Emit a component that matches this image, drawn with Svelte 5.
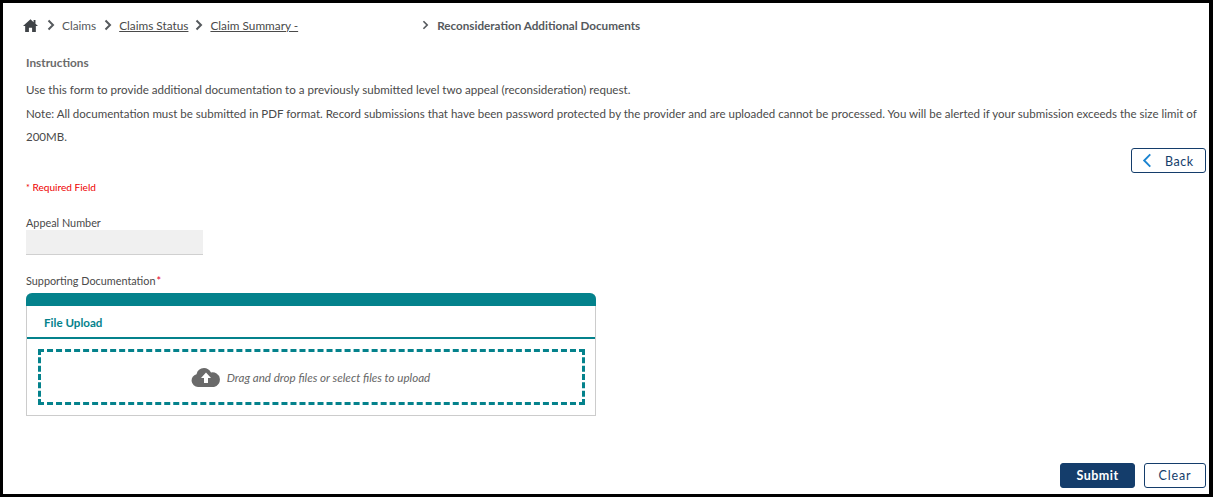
<script lang="ts">
  const crumbs = ['Claims Status', 'Claim Summary -'];
</script>

<div class="page">
  <nav class="crumbs">
    <svg class="home" viewBox="0 0 16 14" width="15" height="13" preserveAspectRatio="none" aria-hidden="true">
      <path d="M8 .2 0 7.600h2.300V14h4v-4.500h3.400V14h4V7.600H16l-2.700-2.400V1.200h-2v2.200z" />
    </svg>
    <svg class="sep" viewBox="0 0 8 12" width="8" height="12" aria-hidden="true"><path d="M1.500 1.500 6 6l-4.500 4.500" /></svg>
    <span class="plain">Claims</span>
    {#each crumbs as c}
      <svg class="sep" viewBox="0 0 8 12" width="8" height="12" aria-hidden="true"><path d="M1.500 1.500 6 6l-4.500 4.500" /></svg>
      <a href="#top" class="link">{c}</a>
    {/each}
    <svg class="sep small" viewBox="0 0 8 12" width="7" height="10" aria-hidden="true"><path d="M1.500 1.500 6 6l-4.500 4.500" /></svg>
    <span class="current">Reconsideration Additional Documents</span>
  </nav>

  <section class="intro">
    <h2>Instructions</h2>
    <p class="first">Use this form to provide additional documentation to a previously submitted level two appeal (reconsideration) request.</p>
    <p class="note">Note: All documentation must be submitted in PDF format. Record submissions that have been password protected by the provider and are uploaded cannot be processed. You will be alerted if your submission exceeds the size limit of 200MB.</p>
  </section>

  <div class="back-row">
    <button class="btn back">
      <svg viewBox="0 0 10 16" width="10" height="15" aria-hidden="true"><path d="M8.500 1.500 2 8l6.500 6.500" /></svg>
      <span>Back</span>
    </button>
  </div>

  <div class="required"><span>*</span> Required Field</div>

  <label class="field-label" for="appeal">Appeal Number</label>
  <input id="appeal" class="readonly" disabled />

  <div class="field-label docs">Supporting Documentation<span class="star">*</span></div>
  <div class="upload">
    <div class="upload-bar"></div>
    <div class="upload-title">File Upload</div>
    <div class="drop-wrap">
      <div class="drop">
        <svg viewBox="0 0 30 20" width="30" height="20" aria-hidden="true">
          <path class="cloud" d="M7 20a6.500 6.500 0 0 1-1.500-12.800A8 8 0 0 1 13 1c3 0 5.500 1.500 7 4.500a6.800 6.800 0 0 1 3 14.500z" />
          <path class="arrow" d="M15 5.500 20 11h-3v5h-4v-5h-3z" />
        </svg>
        <span>Drag and drop files or select files to upload</span>
      </div>
    </div>
  </div>

  <div class="actions">
    <button class="btn submit">Submit</button>
    <button class="btn clear">Clear</button>
  </div>
</div>

<style>
  :global(body) { margin: 0; background: #fff; }
  .page {
    box-sizing: border-box;
    height: 497px;
    border: 3px solid #000;
    border-right-width: 4px;
    padding: 0 3px 6px 23px;
    display: flex;
    flex-direction: column;
    align-items: flex-start;
    font-family: Lato, "Liberation Sans", sans-serif;
    font-size: 11.600px;
    color: #4a4a4a;
  }
  .crumbs { display: flex; align-items: center; height: 16px; margin-top: 14px; font-size: 11.800px; }
  .home { fill: #3f4347; margin-left: -3px; margin-right: 9px; }
  .sep { fill: none; stroke: #55595d; stroke-width: 2; margin-right: 7px; }
  .sep.small { margin-left: 117px; margin-right: 8px; }
  .crumbs .link { margin-right: 7px; }
  .plain { margin-right: 8px; color: #55595d; }
  .link { color: #4a4a4a; }
  .current { font-weight: 700; font-size: 11.700px; color: #55595d; }
  .intro { margin-top: 22px; }
  h2 { margin: 0; font-size: 11.800px; font-weight: 700; line-height: 15px; color: #6a6a6a; }
  p { margin: 0; line-height: 23px; }
  .first { margin-top: 7px; line-height: 25px; }
  .note { font-size: 11.520px; }
  .back-row { align-self: flex-end; margin-top: 0; }
  .btn {
    box-sizing: border-box;
    height: 25px;
    border: 1px solid #143d6b;
    border-radius: 3px;
    background: #fff;
    font-family: inherit;
    font-size: 12.500px;
    letter-spacing: .5px;
    color: #143d6b;
    padding: 0 0 1px;
  }
  .back { width: 75px; display: flex; align-items: center; padding: 0 0 0 10px; gap: 13px; }
  .back span { padding-top: 2px; }
  .back svg { fill: none; stroke: #1b84d0; stroke-width: 2; }
  .required { margin-top: 8px; font-size: 10.100px; color: #ee0000; line-height: 12px; }
  .required span { font-size: 9px; }
  .field-label { line-height: 15px; color: #4a4a4a; font-size: 10.850px; }
  label.field-label { margin-top: 21px; }
  .readonly {
    box-sizing: border-box;
    display: block;
    width: 177px;
    height: 25px;
    border: 0;
    border-bottom: 1px solid #d0d0d0;
    background: #f0f0f0;
    margin-top: 0;
  }
  .docs { margin-top: 18px; }
  .star { color: #e4002b; margin-left: 1px; }
  .upload {
    box-sizing: border-box;
    width: 570px;
    margin-top: 5px;
    border: 1px solid #ccc;
    border-top: 0;
    border-radius: 6px 6px 0 0;
  }
  .upload-bar { height: 13px; margin: 0 -1px; background: #04828c; border-radius: 6px 6px 0 0; }
  .upload-title {
    box-sizing: border-box;
    height: 33px;
    line-height: 33px;
    padding-left: 17px;
    font-weight: 700;
    color: #04828c;
    border-bottom: 2px solid #04828c;
  }
  .drop-wrap { padding: 10px 10px 10px 11px; }
  .drop {
    box-sizing: border-box;
    height: 56px;
    border: 3px dashed #04828c;
    display: flex;
    align-items: center;
    justify-content: center;
    gap: 6px;
    padding-right: 2px;
    font-style: italic;
    color: #666;
  }
  .cloud { fill: #6a6a6a; }
  .arrow { fill: #fff; }
  .actions { align-self: flex-end; margin-top: auto; display: flex; gap: 9px; }
  .submit { width: 75px; background: #143d6b; color: #fff; font-weight: 700; }
  .clear { width: 62px; letter-spacing: .9px; }
</style>
